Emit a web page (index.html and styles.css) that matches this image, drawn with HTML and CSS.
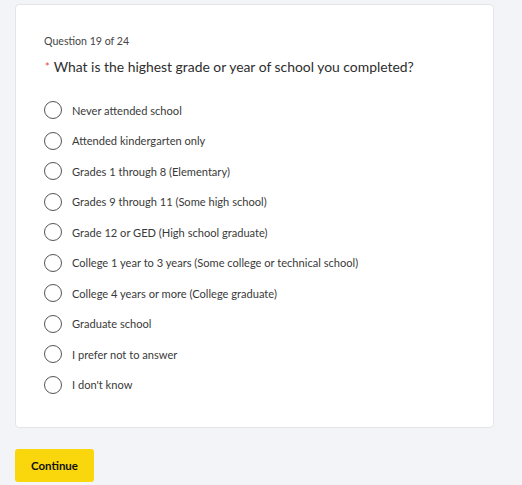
FILE: index.html
```html
<!DOCTYPE html>
<html>
<head>
<meta charset="utf-8">
<link rel="stylesheet" href="styles.css">
</head>
<body>
<div class="page">
  <div class="card">
    <div class="counter">Question 19 of 24</div>
    <div class="question"><span class="req">*</span>What is the highest grade or year of school you completed?</div>
    <div class="options">
      <label class="opt"><span class="radio"></span><span>Never attended school</span></label>
      <label class="opt"><span class="radio"></span><span>Attended kindergarten only</span></label>
      <label class="opt"><span class="radio"></span><span>Grades 1 through 8 (Elementary)</span></label>
      <label class="opt"><span class="radio"></span><span>Grades 9 through 11 (Some high school)</span></label>
      <label class="opt"><span class="radio"></span><span>Grade 12 or GED (High school graduate)</span></label>
      <label class="opt"><span class="radio"></span><span>College 1 year to 3 years (Some college or technical school)</span></label>
      <label class="opt"><span class="radio"></span><span>College 4 years or more (College graduate)</span></label>
      <label class="opt"><span class="radio"></span><span>Graduate school</span></label>
      <label class="opt"><span class="radio"></span><span>I prefer not to answer</span></label>
      <label class="opt"><span class="radio"></span><span>I don't know</span></label>
    </div>
  </div>
  <button class="btn">Continue</button>
</div>
</body>
</html>
```

FILE: styles.css
```css
html, body {
  margin: 0;
  padding: 0;
  background: #f3f4f8;
}
body {
  font-family: "Lato", "Open Sans", sans-serif;
  color: #333;
}
.page {
  padding: 4px 28px 0 15px;
}
.card {
  background: #fff;
  border: 1px solid #e3e5ea;
  border-radius: 4px;
  padding: 29px 20px 25px 28px;
  height: 368px;
}
.counter {
  font-size: 10.6px;
  color: #444;
  line-height: 14px;
}
.question {
  margin-top: 10px;
  font-size: 13.9px;
  line-height: 18px;
  color: #2e2e2e;
  display: flex;
  align-items: flex-start;
}
.req {
  color: #e0474c;
  font-size: 11px;
  margin: 3px 4px 0 1px;
  line-height: 12px;
}
.options {
  margin-top: 25px;
  display: flex;
  flex-direction: column;
  gap: 12.5px;
}
.opt {
  display: flex;
  align-items: center;
  gap: 10px;
  font-size: 11.1px;
  color: #3a3a3a;
  height: 18px;
}
.radio {
  width: 16px;
  height: 16px;
  border: 1px solid #555;
  border-radius: 50%;
  flex: none;
}
.btn {
  margin-top: 21px;
  width: 79px;
  height: 33px;
  background: #fad70c;
  border: none;
  border-radius: 3px;
  font-family: "Lato", sans-serif;
  font-weight: 700;
  font-size: 11.5px;
  color: #111;
  display: block;
}
```
